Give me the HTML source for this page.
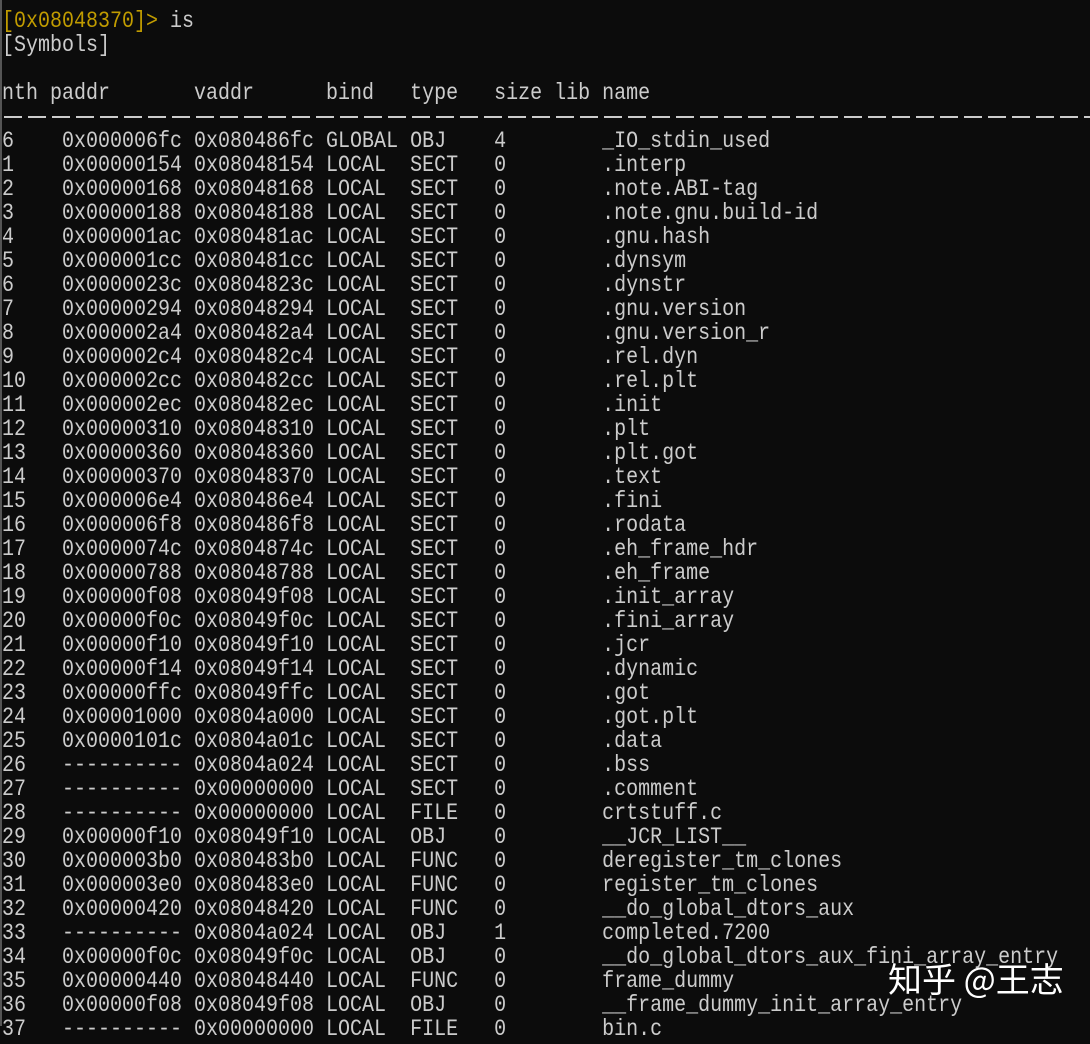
<!DOCTYPE html>
<html><head><meta charset="utf-8"><style>
html,body{margin:0;padding:0;background:#0c0c0c;}
body{width:1090px;height:1026px;overflow:hidden;position:relative;}
#t{position:absolute;left:2px;top:11px;font-family:"Liberation Mono",monospace;font-size:20px;line-height:24px;color:#cccccc;white-space:pre;}
#t div{height:24px;transform:scaleY(1.15);transform-origin:0 60%;}
.y{color:#c19c00}
#dash{position:absolute;left:4px;top:116px;width:1086px;height:2px;background:repeating-linear-gradient(90deg,#cccccc 0 18px,transparent 18px 24px);}
#lb{position:absolute;left:0;top:0;width:2px;height:1026px;background:#555;}
#wm{position:absolute;left:888px;top:956px;font-family:"Noto Sans CJK SC",sans-serif;font-size:34px;color:#fff;line-height:44px;white-space:pre;}
</style></head><body>
<div id="lb"></div>
<div id="t"><div><span class="y">[0x08048370]&gt;</span> is</div><div>[Symbols]</div><div> </div><div>nth paddr       vaddr      bind   type   size lib name</div><div> </div><div>6    0x000006fc 0x080486fc GLOBAL OBJ    4        _IO_stdin_used</div><div>1    0x00000154 0x08048154 LOCAL  SECT   0        .interp</div><div>2    0x00000168 0x08048168 LOCAL  SECT   0        .note.ABI-tag</div><div>3    0x00000188 0x08048188 LOCAL  SECT   0        .note.gnu.build-id</div><div>4    0x000001ac 0x080481ac LOCAL  SECT   0        .gnu.hash</div><div>5    0x000001cc 0x080481cc LOCAL  SECT   0        .dynsym</div><div>6    0x0000023c 0x0804823c LOCAL  SECT   0        .dynstr</div><div>7    0x00000294 0x08048294 LOCAL  SECT   0        .gnu.version</div><div>8    0x000002a4 0x080482a4 LOCAL  SECT   0        .gnu.version_r</div><div>9    0x000002c4 0x080482c4 LOCAL  SECT   0        .rel.dyn</div><div>10   0x000002cc 0x080482cc LOCAL  SECT   0        .rel.plt</div><div>11   0x000002ec 0x080482ec LOCAL  SECT   0        .init</div><div>12   0x00000310 0x08048310 LOCAL  SECT   0        .plt</div><div>13   0x00000360 0x08048360 LOCAL  SECT   0        .plt.got</div><div>14   0x00000370 0x08048370 LOCAL  SECT   0        .text</div><div>15   0x000006e4 0x080486e4 LOCAL  SECT   0        .fini</div><div>16   0x000006f8 0x080486f8 LOCAL  SECT   0        .rodata</div><div>17   0x0000074c 0x0804874c LOCAL  SECT   0        .eh_frame_hdr</div><div>18   0x00000788 0x08048788 LOCAL  SECT   0        .eh_frame</div><div>19   0x00000f08 0x08049f08 LOCAL  SECT   0        .init_array</div><div>20   0x00000f0c 0x08049f0c LOCAL  SECT   0        .fini_array</div><div>21   0x00000f10 0x08049f10 LOCAL  SECT   0        .jcr</div><div>22   0x00000f14 0x08049f14 LOCAL  SECT   0        .dynamic</div><div>23   0x00000ffc 0x08049ffc LOCAL  SECT   0        .got</div><div>24   0x00001000 0x0804a000 LOCAL  SECT   0        .got.plt</div><div>25   0x0000101c 0x0804a01c LOCAL  SECT   0        .data</div><div>26   ---------- 0x0804a024 LOCAL  SECT   0        .bss</div><div>27   ---------- 0x00000000 LOCAL  SECT   0        .comment</div><div>28   ---------- 0x00000000 LOCAL  FILE   0        crtstuff.c</div><div>29   0x00000f10 0x08049f10 LOCAL  OBJ    0        __JCR_LIST__</div><div>30   0x000003b0 0x080483b0 LOCAL  FUNC   0        deregister_tm_clones</div><div>31   0x000003e0 0x080483e0 LOCAL  FUNC   0        register_tm_clones</div><div>32   0x00000420 0x08048420 LOCAL  FUNC   0        __do_global_dtors_aux</div><div>33   ---------- 0x0804a024 LOCAL  OBJ    1        completed.7200</div><div>34   0x00000f0c 0x08049f0c LOCAL  OBJ    0        __do_global_dtors_aux_fini_array_entry</div><div>35   0x00000440 0x08048440 LOCAL  FUNC   0        frame_dummy</div><div>36   0x00000f08 0x08049f08 LOCAL  OBJ    0        __frame_dummy_init_array_entry</div><div>37   ---------- 0x00000000 LOCAL  FILE   0        bin.c</div></div>
<div id="dash"></div>
<div id="wm">知乎 @王志</div>
</body></html>
